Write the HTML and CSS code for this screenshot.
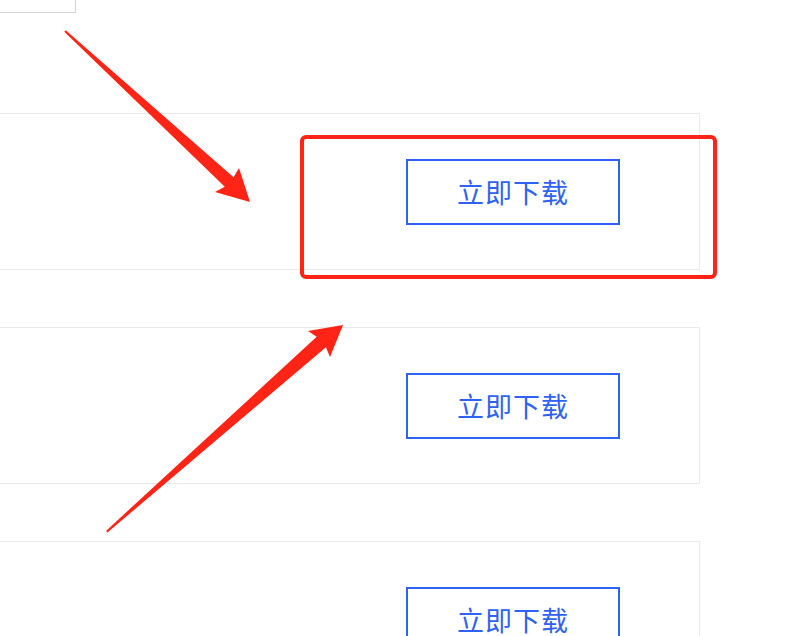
FILE: index.html
```html
<!DOCTYPE html>
<html lang="zh-CN">
<head>
    <meta charset="UTF-8">
    <meta name="viewport" content="width=device-width, initial-scale=1.0">
    <title>立即下载</title>
    <link rel="stylesheet" href="styles.css">
</head>
<body>
    <div class="page">
        <div class="top-box"></div>

        <div class="card-list">
            <div class="card">
                <button class="download-btn">立即下载</button>
            </div>
            <div class="card">
                <button class="download-btn">立即下载</button>
            </div>
            <div class="card">
                <button class="download-btn">立即下载</button>
            </div>
        </div>

        <!-- Annotation overlay: red box and arrows -->
        <svg class="annotations" width="800" height="636" viewBox="0 0 800 636">
            <rect x="302" y="137" width="413" height="140" rx="4" ry="4" fill="none" stroke="#ff2415" stroke-width="4"/>
            <polygon fill="#ff2415" points="65.7,30.3 233.6,177.2 239,168 250,202 215,192 224.8,186.8 64.3,31.7"/>
            <polygon fill="#ff2415" points="106,530.9 316.7,336.7 308,331 343,325 330,357 325.9,347.3 107.4,532.5"/>
        </svg>
    </div>
</body>
</html>
```

FILE: styles.css
```css
body {
    margin: 0;
    padding: 0;
    background-color: #fff;
    font-family: "Noto Sans CJK SC", "Noto Sans", sans-serif;
}

.page {
    position: relative;
    width: 800px;
    height: 636px;
    overflow: hidden;
}

.top-box {
    width: 96px;
    height: 40px;
    margin-top: -27px;
    margin-left: -20px;
    box-sizing: border-box;
    border: 1px solid #d4d4d4;
}

.card-list {
    margin-top: 100px;
    margin-left: -20px;
    display: flex;
    flex-direction: column;
    gap: 57px;
}

.card {
    width: 720px;
    height: 157px;
    box-sizing: border-box;
    border: 1px solid #e9e9e9;
    background-color: #fff;
    display: flex;
    align-items: center;
    justify-content: flex-end;
    padding-right: 79px;
}

.download-btn {
    width: 214px;
    height: 66px;
    box-sizing: border-box;
    border: 2px solid #2f62f2;
    background-color: #fff;
    color: #2f62f2;
    font-family: "Noto Sans CJK SC", sans-serif;
    font-size: 27px;
    letter-spacing: 1px;
    padding: 0;
    cursor: pointer;
}

.annotations {
    position: absolute;
    top: 0;
    left: 0;
    pointer-events: none;
}
```
